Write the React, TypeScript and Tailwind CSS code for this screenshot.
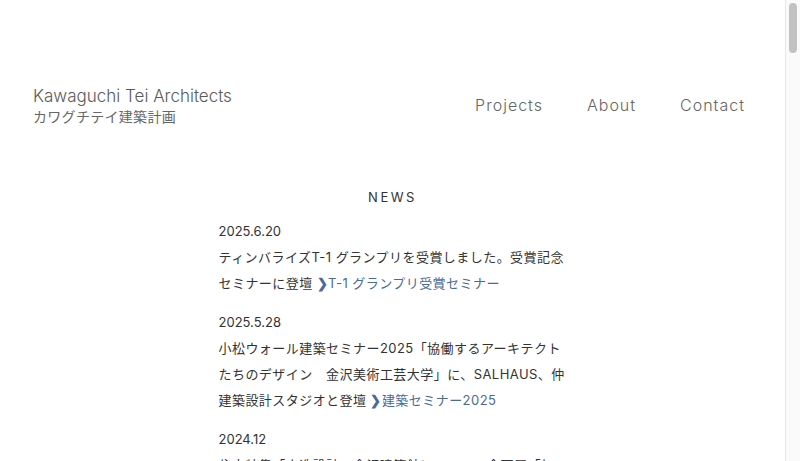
import React from 'react';

const jp = "font-['Inter','Noto_Sans_CJK_JP',sans-serif]";

type News = {
  date: string;
  body: string;
  link?: string;
};

const news: News[] = [
  {
    date: '2025.6.20',
    body: 'ティンバライズT-1 グランプリを受賞しました。受賞記念セミナーに登壇',
    link: 'T-1 グランプリ受賞セミナー',
  },
  {
    date: '2025.5.28',
    body: '小松ウォール建築セミナー2025「協働するアーキテクトたちのデザイン　金沢美術工芸大学」に、SALHAUS、仲建築設計スタジオと登壇',
    link: '建築セミナー2025',
  },
  {
    date: '2024.12',
    body: '住宅特集「木造設計の金沢建築館について」企画展「加賀藩の住まいと町家」に出展しました',
  },
  {
    date: '2024.10.3',
    body: '金沢市内の集合住宅が竣工しました',
  },
];

function Header() {
  return (
    <header className="flex items-start justify-between pl-[33px] pr-[40px] pt-[84px]">
      <div className="flex flex-col">
        <span className="font-['Inter',sans-serif] text-[17px] leading-[24px] font-light text-[#5a5a5a]">
          Kawaguchi Tei Architects
        </span>
        <span className={`${jp} text-[14px] leading-[18px] tracking-[0.3px] text-[#666]`}>カワグチテイ建築計画</span>
      </div>
      <nav className="flex gap-[44px] pt-[9px] font-['Inter',sans-serif] text-[16px] font-light tracking-[1px] text-[#666]">
        <a>Projects</a>
        <a>About</a>
        <a>Contact</a>
      </nav>
    </header>
  );
}

function Scrollbar() {
  return (
    <div className="flex h-full w-[15px] shrink-0 justify-center border-l border-[#e6e6e6] bg-[#fafafa] pt-[3px]">
      <div className="h-[50px] w-[8px] rounded-full bg-[#c2c2c2]" />
    </div>
  );
}

export default function App() {
  return (
    <div className="flex h-[461px] overflow-hidden bg-white">
      <div className="min-w-0 flex-1">
        <Header />
        <main className="mt-[62px] flex flex-col items-center">
          <h2 className="font-['Inter',sans-serif] text-[13px] tracking-[2.5px] text-[#333]">NEWS</h2>
          <div className="mt-[10px] flex w-[348px] flex-col gap-[13px]">
            {news.map((n) => (
              <div key={n.date} className={`${jp} text-[13px] leading-[26px] tracking-[0.45px] text-[#333]`}>
                <div className="tracking-normal">{n.date}</div>
                <p>
                  {n.body}
                  {n.link && (
                    <a className="text-[#4b6a96]">
                      <span className="ml-[4px] font-bold">❯</span>
                      {n.link}
                    </a>
                  )}
                </p>
              </div>
            ))}
          </div>
        </main>
      </div>
      <Scrollbar />
    </div>
  );
}
